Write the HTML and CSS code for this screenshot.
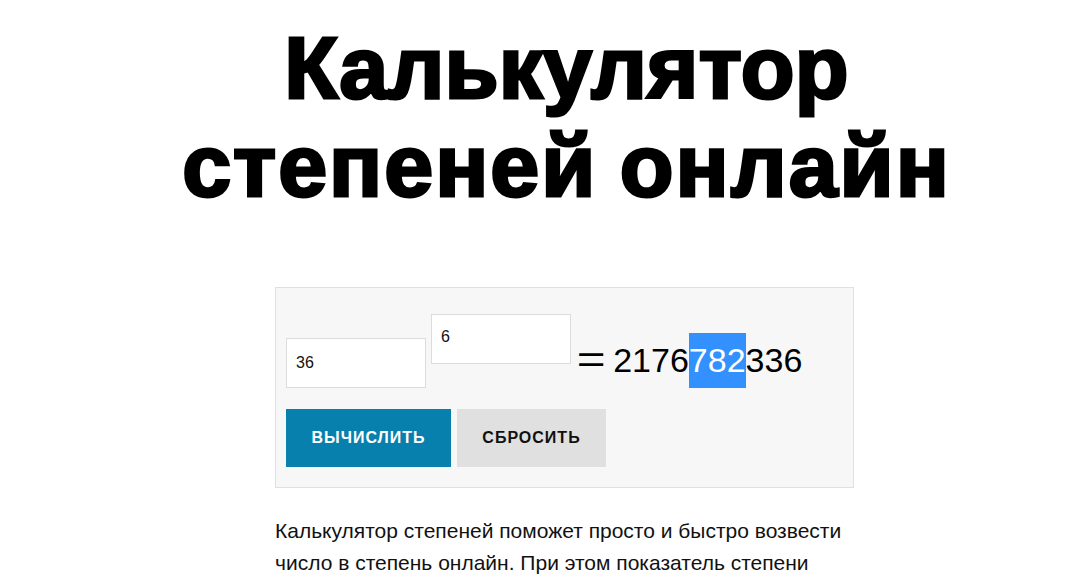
FILE: index.html
```html
<!DOCTYPE html>
<html lang="ru">
<head>
<meta charset="utf-8">
<title>Калькулятор степеней онлайн</title>
<link rel="stylesheet" href="styles.css">
</head>
<body>
<main class="page">
  <h1 class="title"><span class="title-line title-line-1">Калькулятор</span> <span class="title-line title-line-2">степеней онлайн</span></h1>
  <section class="calc">
    <div class="calc-row">
      <input class="field field-base" type="text" value="36">
      <input class="field field-exp" type="text" value="6">
      <span class="equals">=</span>
      <span class="result">2176<span class="sel">782</span>336</span>
    </div>
    <div class="calc-buttons">
      <button class="btn btn-primary" type="button">ВЫЧИСЛИТЬ</button>
      <button class="btn btn-secondary" type="button">СБРОСИТЬ</button>
    </div>
  </section>
  <p class="intro">Калькулятор степеней поможет просто и быстро возвести число в степень онлайн. При этом показатель степени может быть как положительным, так и отрицательным.</p>
</main>
</body>
</html>
```

FILE: styles.css
```css
html, body {
  margin: 0;
  padding: 0;
  background: #ffffff;
  color: #000000;
  font-family: "Liberation Sans", Arial, sans-serif;
  overflow: hidden;
}

.page {
  width: 579px;
  margin-left: 275px;
  padding-top: 19px;
}

.title {
  margin: 0 -110px;
  font-size: 88px;
  line-height: 98px;
  font-weight: 700;
  text-align: center;
  -webkit-text-stroke: 3px #000;
}

.title-line {
  display: block;
}

.title-line-1 {
  letter-spacing: 0.2px;
  margin-left: 4px;
}

.title-line-2 {
  letter-spacing: 2px;
  word-spacing: -4px;
  margin-left: 4px;
}

.calc {
  margin-top: 72px;
  background: #f7f7f7;
  border: 1px solid #e0e0e0;
  padding: 26px 10px 20px;
}

.calc-row {
  display: flex;
  align-items: flex-end;
}

.field {
  box-sizing: border-box;
  width: 140px;
  height: 50px;
  border: 1px solid #dcdcdc;
  background: #fff;
  padding: 0 9px;
  font-family: "Liberation Sans", Arial, sans-serif;
  font-size: 16px;
  color: #111;
  outline: none;
}

.field-exp {
  margin-left: 5px;
  margin-bottom: 24px;
  padding-bottom: 4px;
}

.equals {
  margin-left: 9px;
  font-size: 38px;
  line-height: 55px;
  font-weight: 300;
  transform: scaleX(1.3);
}

.result {
  margin-left: 11px;
  font-size: 34px;
  line-height: 55px;
  height: 55px;
}

.sel {
  display: inline-block;
  background: #3390ff;
  color: #fff;
}

.calc-buttons {
  display: flex;
  gap: 6px;
  margin-top: 21px;
}

.btn {
  height: 58px;
  border: none;
  padding: 0 25px;
  font-family: "Liberation Sans", Arial, sans-serif;
  font-size: 16px;
  font-weight: 700;
  letter-spacing: 1px;
  cursor: pointer;
}

.btn-primary {
  width: 165px;
  background: #0780ad;
  color: #fff;
}

.btn-secondary {
  width: 149px;
  background: #e0e0e0;
  color: #111;
}

.intro {
  margin: 27px 0 0;
  font-size: 21px;
  line-height: 32px;
  color: #111;
}
```
